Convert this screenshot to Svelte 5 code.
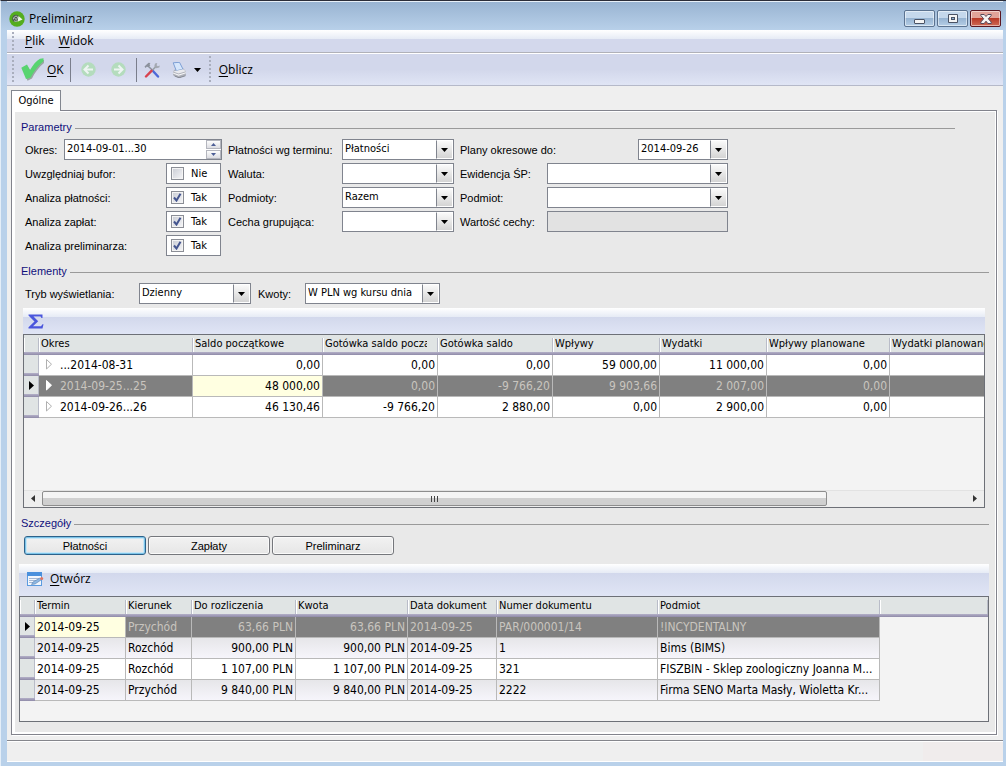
<script>
  let flags = $state([
    { label: 'Uwzględniaj bufor:', on: false },
    { label: 'Analiza płatności:', on: true },
    { label: 'Analiza zapłat:', on: true },
    { label: 'Analiza preliminarza:', on: true }
  ]);

  let period = $state('2014-09-01...30');
  let plannedTo = $state('2014-09-26');
  let detail = $state('Płatności');

  const middle = [
    { id: 'termin', label: 'Płatności wg terminu:', options: ['Płatności'] },
    { id: 'waluta', label: 'Waluta:', options: [''] },
    { id: 'podmioty', label: 'Podmioty:', options: ['Razem'] },
    { id: 'cecha', label: 'Cecha grupująca:', options: [''] }
  ];

  const details = ['Płatności', 'Zapłaty', 'Preliminarz'];

  const periodCols = [
    { title: 'Okres', width: 154 },
    { title: 'Saldo początkowe', width: 130 },
    { title: 'Gotówka saldo początkowe', width: 115 },
    { title: 'Gotówka saldo', width: 115 },
    { title: 'Wpływy', width: 107 },
    { title: 'Wydatki', width: 107 },
    { title: 'Wpływy planowane', width: 123 },
    { title: 'Wydatki planowane', width: 120 }
  ];
  const periodRows = [
    ['...2014-08-31', '0,00', '0,00', '0,00', '59 000,00', '11 000,00', '0,00', ''],
    ['2014-09-25...25', '48 000,00', '0,00', '-9 766,20', '9 903,66', '2 007,00', '0,00', ''],
    ['2014-09-26...26', '46 130,46', '-9 766,20', '2 880,00', '0,00', '2 900,00', '0,00', '']
  ];

  const payCols = [
    { title: 'Termin', width: 91 },
    { title: 'Kierunek', width: 66 },
    { title: 'Do rozliczenia', width: 104 },
    { title: 'Kwota', width: 112 },
    { title: 'Data dokument', width: 89 },
    { title: 'Numer dokumentu', width: 161 },
    { title: 'Podmiot', width: 222 }
  ];
  const payRows = [
    ['2014-09-25', 'Przychód', '63,66 PLN', '63,66 PLN', '2014-09-25', 'PAR/000001/14', '!INCYDENTALNY'],
    ['2014-09-25', 'Rozchód', '900,00 PLN', '900,00 PLN', '2014-09-25', '1', 'Bims (BIMS)'],
    ['2014-09-25', 'Rozchód', '1 107,00 PLN', '1 107,00 PLN', '2014-09-25', '321', 'FISZBIN - Sklep zoologiczny Joanna M...'],
    ['2014-09-25', 'Przychód', '9 840,00 PLN', '9 840,00 PLN', '2014-09-25', '2222', 'Firma SENO Marta Masły, Wioletta Kr...']
  ];
</script>

{#snippet grip()}
  <span class="grip" aria-hidden="true"></span>
{/snippet}

{#snippet caret()}
  <svg class="caret" width="7" height="4" viewBox="0 0 7 4" aria-hidden="true"><path d="M0 0h7L3.500 4z" /></svg>
{/snippet}

{#snippet combo(id, options)}
  <span class="box combo">
    <select {id}>
      {#each options as o}<option>{o}</option>{/each}
    </select>
    <span class="drop">{@render caret()}</span>
  </span>
{/snippet}

{#snippet pointer()}
  <svg width="5" height="9" viewBox="0 0 5 9" aria-hidden="true"><path d="M0 0v9l5-4.500z" /></svg>
{/snippet}

<div class="window">
  <header class="title">
    <svg width="16" height="16" viewBox="0 0 16 16" aria-hidden="true">
      <circle cx="8" cy="8" r="7.700" fill="#54ad1e" />
      <path d="M3.200 8.200C3 5 5.500 3.200 8 3.900c2.200.7 2.600 3 1.600 5.200-1.200 2.400-5.900 2.600-6.400-.9z" fill="#4a574c" />
      <path d="M4.600 8.300C4.500 6.200 6 5 7.600 5.300 9 5.700 8.800 7.400 7.700 8 6.800 8.400 6 8 6.100 7.200M5 9.500c.8 1 2 1 3.200.4" fill="none" stroke="#c9d4c9" stroke-width="1" />
      <path d="M9.500 5l4 3.500-5 2.300z" fill="#eef8e8" />
    </svg>
    <h1>Preliminarz</h1>
    <div class="winbtns">
      <button aria-label="Minimalizuj">
        <svg width="12" height="10" viewBox="0 0 12 10"><rect x=".500" y="5.500" width="10" height="4" rx=".500" fill="#f4f4f4" stroke="#4a5264" /></svg>
      </button>
      <button aria-label="Maksymalizuj">
        <svg width="12" height="10" viewBox="0 0 12 10"><path d="M1.500.500h9v8h-9z" fill="#f4f4f4" stroke="#4a5264" /><rect x="4.500" y="3.500" width="3" height="2" fill="#8fb0d2" stroke="#4a5264" /></svg>
      </button>
      <button class="close" aria-label="Zamknij">
        <svg width="12" height="10" viewBox="0 0 12 10"><path d="M.800.500h3.400L6 2.500 7.800.500h3.400v1L8.300 4.800l2.900 3.200v1.500H7.800L6 7.200 4.200 9.500H.800V8l2.900-3.200L.800 1.500z" fill="#f6f3f3" stroke="#57495a" /></svg>
      </button>
    </div>
  </header>

  <div class="client">
    <nav class="menu">
      {@render grip()}
      <button><u>P</u>lik</button>
      <button><u>W</u>idok</button>
    </nav>

    <div class="tools">
      {@render grip()}
      <button class="ok">
        <svg width="23" height="23" viewBox="0 0 23 23" aria-hidden="true">
          <path d="M2 11L7 9l3 4.500C13 8 16.500 4 20 2l3 0v3C18 9 13.500 15 11 20.500L6.500 22.800z" fill="#9aa6a2" />
          <path d="M.300 9.800L6 6.500l3 5.500C12 7 15 3 19 .800L22.500.300v3C18 7 13 13 9.800 19.500L5 21z" fill="#58d470" />
        </svg>
        <span><u>O</u>K</span>
      </button>
      <i class="sep"></i>
      <button class="nav" aria-label="Wstecz">
        <svg width="15" height="15" viewBox="0 0 15 15"><circle cx="7.500" cy="7.500" r="7.200" fill="#b4dcbd" /><path d="M12 7.500H4M7.500 3.500l-4 4 4 4" fill="none" stroke="#eef5f3" stroke-width="2" /></svg>
      </button>
      <button class="nav" aria-label="Dalej">
        <svg width="15" height="15" viewBox="0 0 15 15"><circle cx="7.500" cy="7.500" r="7.200" fill="#b4dcbd" /><path d="M3 7.500h8M7.500 3.500l4 4-4 4" fill="none" stroke="#eef5f3" stroke-width="2" /></svg>
      </button>
      <i class="sep"></i>
      <button class="wrench" aria-label="Narzędzia">
        <svg width="16" height="16" viewBox="0 0 16 16">
          <path d="M3.500 3.500L9 8.800" stroke="#8d939c" stroke-width="1.500" />
          <path d="M.500 4.500L4.500.800l2 .2-1 1.200.8 1-2 2-1.300-.700L1.500 6z" fill="#8b919c" />
          <path d="M8.500 8.500l5.500 6" stroke="#4c68d8" stroke-width="2.400" stroke-linecap="round" />
          <path d="M12 4.500L7.500 9" stroke="#9aa0a8" stroke-width="1.700" />
          <path d="M7.500 8.800L2 14.500" stroke="#d8434f" stroke-width="2.400" stroke-linecap="round" />
          <path d="M11 1.500L10.300 4.200l2 2 3-.700.500-2-2 .8-1.200-1L13.300 1z" fill="#a3a8b0" />
        </svg>
      </button>
      <button class="print" aria-label="Drukuj">
        <svg width="16" height="16" viewBox="0 0 16 16">
          <path d="M2 9.500l2-2.200 8-1 3 3v4L8 15.800l-6-2.500z" fill="#aeb1b9" />
          <path d="M2.200.800L8.500.300l3.500 6.900-6.700 1.600z" fill="#d6e6fb" stroke="#7d9fd4" />
          <path d="M2 9.500l3.300-.7 6.700-1.600 3 2.100-7.500 2.200z" fill="#e9eaee" />
          <path d="M2 10.500l5.500 2 7.500-2.200v1L7.500 13.700 2 11.500z" fill="#f6f6f8" />
          <path d="M3.500 13.900l4.500 1.900 6.500-2.100" stroke="#82868f" fill="none" />
        </svg>
        {@render caret()}
      </button>
      {@render grip()}
      <button class="calc"><u>O</u>blicz</button>
    </div>

    <main>
      <div class="tabs"><button class="tab">Ogólne</button></div>
      <div class="sheet">
        <div class="page">
          <h2 class="short">Parametry</h2>
          <div class="params">
            <div class="col one">
              <div class="line">
                <label class="grow" for="okres">Okres:</label>
                <span class="box period">
                  <input id="okres" bind:value={period} />
                  <span class="spin">
                    <button aria-label="Następny okres"><svg width="5" height="3" viewBox="0 0 5 3"><path d="M0 3h5L2.500 0z" /></svg></button>
                    <button aria-label="Poprzedni okres"><svg width="5" height="3" viewBox="0 0 5 3"><path d="M0 0h5L2.500 3z" /></svg></button>
                  </span>
                </span>
              </div>
              {#each flags as f, i}
                <div class="line">
                  <label class="grow" for="flag{i}">{f.label}</label>
                  <span class="box flag">
                    <span class="tick">
                      <input id="flag{i}" type="checkbox" bind:checked={f.on} />
                      <svg width="9" height="9" viewBox="0 0 9 9" aria-hidden="true"><path d="M1 4.500l2.500 3L7.500.800" /></svg>
                    </span>
                    <span>{f.on ? 'Tak' : 'Nie'}</span>
                  </span>
                </div>
              {/each}
            </div>
            <div class="col two">
              {#each middle as m}
                <div class="line">
                  <label class="grow" for={m.id}>{m.label}</label>
                  {@render combo(m.id, m.options)}
                </div>
              {/each}
            </div>
            <div class="col three">
              <div class="line">
                <label class="grow" for="plany">Plany okresowe do:</label>
                <span class="box date">
                  <input id="plany" bind:value={plannedTo} />
                  <button class="drop" aria-label="Kalendarz">{@render caret()}</button>
                </span>
              </div>
              <div class="line"><label class="grow" for="ewid">Ewidencja ŚP:</label>{@render combo('ewid', [''])}</div>
              <div class="line"><label class="grow" for="podm">Podmiot:</label>{@render combo('podm', [''])}</div>
              <div class="line"><label class="grow" for="wart">Wartość cechy:</label><span class="box off"><input id="wart" disabled /></span></div>
            </div>
          </div>

          <h2>Elementy</h2>
          <div class="view">
            <label class="mode" for="tryb">Tryb wyświetlania:</label>
            {@render combo('tryb', ['Dzienny'])}
            <label class="amounts" for="kwoty">Kwoty:</label>
            <span class="wide">{@render combo('kwoty', ['W PLN wg kursu dnia'])}</span>
          </div>

          <section class="periods">
            <div class="bar sum">
              <button aria-label="Suma">
                <svg width="16" height="15" viewBox="0 0 16 15"><path d="M.500.500h14V4h-1l-1-1.500H5.500l4.700 4.800-5.200 5h8l1.500-2h1L14.500 14.500H.500v-1.200l6-5.800-6-6z" fill="#4a56dc" /></svg>
              </button>
            </div>
            <div class="grid">
              <div class="clip">
                <table class="t1">
                  <colgroup><col class="mark" />{#each periodCols as c}<col style="width:{c.width}px" />{/each}</colgroup>
                  <thead><tr><th></th>{#each periodCols as c}<th><span>{c.title}</span></th>{/each}</tr></thead>
                  <tbody>
                    {#each periodRows as row, r}
                      <tr class:sel={r === 1}>
                        <th scope="row">{#if r === 1}{@render pointer()}{/if}</th>
                        {#each row as cell, c}
                          <td class:num={c > 0} class:focus={r === 1 && c === 1}>
                            {#if c === 0}
                              <svg class="twist" width="7" height="11" viewBox="0 0 7 11" aria-hidden="true"><path d="M.500.500v9.500L5.500 5.200z" /></svg>
                            {/if}{cell}
                          </td>
                        {/each}
                      </tr>
                    {/each}
                  </tbody>
                </table>
              </div>
              <div class="scroll">
                <button aria-label="W lewo"><svg width="4" height="7" viewBox="0 0 4 7"><path d="M4 0v7L0 3.500z" /></svg></button>
                <div class="track"><div class="thumb"><i></i><i></i><i></i></div></div>
                <button aria-label="W prawo"><svg width="4" height="7" viewBox="0 0 4 7"><path d="M0 0v7l4-3.500z" /></svg></button>
              </div>
            </div>
          </section>

          <h2>Szczegóły</h2>
          <div class="switch">
            {#each details as d}
              <button class:active={detail === d} onclick={() => (detail = d)}>{d}</button>
            {/each}
          </div>

          <section class="payments">
            <div class="bar open">
              <button>
                <svg width="17" height="15" viewBox="0 0 17 15" aria-hidden="true">
                  <rect x=".500" y=".500" width="14" height="13" fill="#f2f6fd" stroke="#5b9be0" />
                  <path d="M0 0h15v4H0z" fill="#4a90dd" />
                  <path d="M2 6.500h10M2 8.500h9M2 10.500h5" stroke="#a5b8d4" />
                  <path d="M4.500 12.500l1.500-2.500 7-4 1.500 1.700L8 12z" fill="#8eb8e4" stroke="#5b7fae" stroke-width=".600" />
                  <circle cx="14.700" cy="6.500" r="1.500" fill="#e07460" />
                </svg>
                <span><u>O</u>twórz</span>
              </button>
            </div>
            <div class="grid low">
              <table class="t2">
                <colgroup><col class="mark" />{#each payCols as c}<col style="width:{c.width}px" />{/each}<col /></colgroup>
                <thead><tr><th></th>{#each payCols as c}<th><span>{c.title}</span></th>{/each}<th></th></tr></thead>
                <tbody>
                  {#each payRows as row, r}
                    <tr class:sel={r === 0} class:alt={r % 2 === 1}>
                      <th scope="row">{#if r === 0}{@render pointer()}{/if}</th>
                      {#each row as cell, c}
                        <td class:num={c === 2 || c === 3} class:focus={r === 0 && c === 0}>{cell}</td>
                      {/each}
                      <td class="rest"></td>
                    </tr>
                  {/each}
                </tbody>
              </table>
            </div>
          </section>
        </div>
      </div>
    </main>

    <footer></footer>
  </div>
</div>

<style>
  :global(body) {
    margin: 0;
    background: #b9d1ea;
  }
  .window {
    --ui: 'Liberation Sans', Arial, sans-serif;
    --tahoma: 'DejaVu Sans Condensed', 'DejaVu Sans', sans-serif;
    --segoe: 'Open Sans', 'Noto Sans', sans-serif;
    box-sizing: border-box;
    min-height: 100vh;
    display: flex;
    flex-direction: column;
    padding: 0 3px 4px 6px;
    border-top: 1px solid #2b2d38;
    border-left: 1px solid #e4eef8;
    background: linear-gradient(#98b3d1, #b9d1ea 30px, #b9d1ea);
    font: 11px/14px var(--ui);
    color: #000;
  }
  button,
  input,
  select {
    font: inherit;
    color: inherit;
    margin: 0;
    padding: 0;
    border: 0;
    background: none;
    border-radius: 0;
  }
  button {
    display: flex;
    align-items: center;
    justify-content: center;
  }
  svg {
    display: block;
    flex: none;
  }
  u {
    text-underline-offset: 2px;
  }

  .title {
    display: flex;
    align-items: center;
    gap: 4px;
    height: 29px;
    padding: 6px 2px 0;
    box-sizing: border-box;
    box-shadow: 0 1px 0 #e8f0f8 inset;
    font: 12px/16px var(--segoe);
  }
  h1 {
    margin: 0;
    flex: 1;
    font: inherit;
  }
  .winbtns {
    display: flex;
    gap: 2px;
  }
  .winbtns button {
    box-sizing: border-box;
    width: 31px;
    height: 17px;
    border: 1px solid #5c7390;
    border-radius: 2px;
    background: linear-gradient(#c5d8ec 45%, #97b4d2 50%, #b5cee6);
    box-shadow: 0 0 0 1px rgba(255, 255, 255, 0.5) inset;
  }
  .winbtns .close {
    border-color: #5a1620;
    background: linear-gradient(#e2a399 45%, #b93a28 50%, #cf6a55);
  }

  .client {
    flex: 1;
    display: flex;
    flex-direction: column;
    background: #efefef;
  }
  .menu,
  .tools {
    display: flex;
    align-items: center;
    font: 12px/16px var(--segoe);
  }
  .menu {
    height: 22px;
    padding-left: 5px;
    gap: 14px;
    border-bottom: 1px solid #b0b1b8;
    background: linear-gradient(#fff, #e6ebf5 9px, #d3d8ec 9px, #d3d8ec);
  }
  .menu .grip {
    margin-right: -4px;
  }
  .tools {
    height: 33px;
    padding-left: 5px;
    box-sizing: border-box;
    border-top: 1px solid #fff;
    border-bottom: 1px solid #b5b9c9;
    background: linear-gradient(#d2d7eb 50%, #e0e5f5);
  }
  .grip {
    width: 3px;
    height: 18px;
    background: radial-gradient(circle at 1px 1px, #a9aebd 1px, transparent 1px) 0 0 / 3px 4px;
  }
  .tools .grip {
    height: 27px;
  }
  .sep {
    width: 1px;
    height: 24px;
    background: #7a7e8c;
  }
  .ok {
    gap: 3px;
    padding: 0 6px;
  }
  .nav {
    width: 30px;
  }
  .sep + .nav {
    padding-left: 2px;
    width: 33px;
  }
  .nav + .sep {
    margin-left: 2px;
  }
  .wrench {
    width: 30px;
  }
  .print {
    gap: 7px;
    margin-left: 4px;
    padding-right: 8px;
  }
  .calc {
    margin-left: 7px;
  }
  .caret {
    fill: #000;
  }

  main {
    flex: 1;
    display: flex;
    flex-direction: column;
    padding: 4px 6px 5px 4px;
  }
  .tabs {
    display: flex;
  }
  .tab {
    height: 21px;
    width: 50px;
    box-sizing: border-box;
    margin-bottom: -1px;
    border: 1px solid #82868f;
    border-bottom: 0;
    background: #fff;
    font: 11px/14px var(--tahoma);
    z-index: 1;
  }
  .sheet {
    flex: 1;
    display: flex;
    padding: 1px 1px 2px 3px;
    border: 1px solid #82838c;
    background: #fff;
    box-shadow: 1px 1px 0 #fff;
  }
  .page {
    flex: 1;
    min-width: 0;
    display: flex;
    flex-direction: column;
    padding: 8px 6px 10px 4px;
    background: #e9e9e9;
  }
  h2 {
    display: flex;
    align-items: center;
    gap: 3px;
    margin: 0 0 0 2px;
    font: 11px/14px var(--ui);
    color: #10107c;
  }
  h2::after {
    content: '';
    flex: 1;
    height: 1px;
    margin-top: 3px;
    background: #9a9a9a;
  }
  .short {
    margin-right: 34px;
  }

  .params {
    display: flex;
    gap: 6px;
    padding: 5px 0 0 6px;
  }
  .col {
    display: flex;
    flex-direction: column;
    gap: 3px;
  }
  .one {
    width: 197px;
  }
  .two {
    width: 226px;
  }
  .three {
    width: 268px;
  }
  .line {
    display: flex;
    align-items: center;
    height: 21px;
  }
  .grow {
    flex: 1;
  }
  .box {
    display: flex;
    position: relative;
    box-sizing: border-box;
    height: 21px;
    border: 1px solid #80848e;
    background: #fff;
    font: 11px/14px var(--tahoma);
  }
  .box input:not([type='checkbox']),
  .box select {
    flex: 1;
    min-width: 0;
    padding: 0 1px 1px 2px;
    appearance: none;
  }
  .combo {
    width: 112px;
  }
  .three .combo,
  .off {
    width: 181px;
  }
  .wide .combo {
    width: 135px;
  }
  .off {
    background: #e2e2e2;
  }
  .date {
    width: 90px;
  }
  .drop {
    display: flex;
    align-items: center;
    justify-content: center;
    box-sizing: border-box;
    width: 17px;
    border: 1px solid #fff;
    border-left: 1px solid #80848e;
    background: linear-gradient(#fafafa, #d4d4d4);
  }
  .combo .drop {
    position: absolute;
    inset: 0 0 0 auto;
    pointer-events: none;
  }
  .period {
    width: 158px;
  }
  .spin {
    display: flex;
    flex-direction: column;
    width: 15px;
    gap: 1px;
  }
  .spin button {
    flex: 1;
    border: 1px solid #b4b6be;
    background: linear-gradient(#fdfdfd, #dcdde2);
    fill: #4c5e96;
  }
  .flag {
    width: 55px;
    align-items: center;
    gap: 7px;
    padding-left: 4px;
    margin-right: 1px;
  }
  .tick {
    position: relative;
    display: flex;
  }
  .tick input {
    appearance: none;
    box-sizing: border-box;
    width: 13px;
    height: 13px;
    border: 1px solid #8b8e96;
    background: linear-gradient(135deg, #c9ccd4, #f6f6f8);
    box-shadow: 0 0 0 1px #f4f4f4 inset;
  }
  .tick svg {
    position: absolute;
    inset: 2px;
    visibility: hidden;
    fill: none;
    stroke: #44558f;
    stroke-width: 2;
    pointer-events: none;
  }
  .tick input:checked + svg {
    visibility: visible;
  }

  .params + h2 {
    margin-top: 8px;
  }
  .view {
    display: flex;
    align-items: center;
    padding: 5px 0 4px 6px;
  }
  .mode {
    width: 114px;
  }
  .amounts {
    width: 47px;
    margin-left: 7px;
  }

  .bar {
    display: flex;
    align-items: center;
    background: linear-gradient(#fff, #e6ebf5 9px, #d2d8ec 9px, #e0e5f5);
    font: 12px/16px var(--segoe);
  }
  .periods {
    flex: 1;
    display: flex;
    flex-direction: column;
    margin: 0 4px 8px;
  }
  .sum {
    height: 26px;
    padding-left: 5px;
  }
  .grid {
    border: 1px solid #6d7077;
    background: #f3f3f3;
  }
  .periods .grid {
    flex: 1;
    display: flex;
    flex-direction: column;
  }
  .clip {
    flex: 1;
    overflow: hidden;
  }
  table {
    table-layout: fixed;
    border-collapse: separate;
    border-spacing: 0;
    font: 12px/14px var(--tahoma);
  }
  .t1 {
    width: 986px;
  }
  .t2 {
    width: 100%;
  }
  .mark {
    width: 15px;
  }
  th,
  td {
    box-sizing: border-box;
    height: 21px;
    padding: 0 2px;
    text-align: left;
    font-weight: normal;
    white-space: nowrap;
    overflow: hidden;
  }
  thead th {
    height: 20px;
    padding: 0;
    background:
      linear-gradient(#b4b0c8, #8f8aa8) 0 100% / 100% 3px no-repeat,
      linear-gradient(#b9bcc8, #b9bcc8) 100% 3px / 1px 14px no-repeat,
      linear-gradient(#fff, #fff) 0 3px / 1px 14px no-repeat,
      #e0e4e4;
    font-size: 11px;
  }
  thead span {
    display: block;
    margin: 0 4px 2px 2px;
    overflow: hidden;
  }
  .t1 thead span {
    margin-right: 11px;
  }
  .t1 th:last-child span {
    margin-right: 0;
  }
  tbody th {
    padding: 0 0 0 5px;
    background:
      linear-gradient(#b4b0c8, #8f8aa8) 0 100% / 100% 3px no-repeat,
      linear-gradient(#b9bcc8, #b9bcc8) 100% 0 / 1px 18px no-repeat,
      #e0e4e4;
  }
  tbody th svg {
    margin-bottom: 2px;
  }
  td {
    background: #fff;
    border-right: 1px solid #b9b9b9;
    border-bottom: 1px solid #b9b9b9;
  }
  .num {
    text-align: right;
  }
  .sel td {
    background: #808080;
    color: #c9c5bf;
  }
  .alt td {
    background: linear-gradient(#e6e6e9, #f6f5fb);
  }
  .sel .focus {
    background: #ffffe1;
    color: #000;
  }
  tr .rest,
  .sel .rest {
    background: none;
    border: 0;
  }
  .twist {
    display: inline-block;
    margin: 0 7px -1px 5px;
    fill: #fff;
    stroke: #b0b0b0;
  }
  .sel .twist {
    stroke: #fff;
  }

  .scroll {
    display: flex;
    height: 17px;
    background: #eee;
    border-top: 1px solid #e2e2e2;
    box-sizing: border-box;
    padding-bottom: 1px;
  }
  .scroll button {
    width: 18px;
    fill: #333;
  }
  .track {
    flex: 1;
    display: flex;
  }
  .thumb {
    box-sizing: border-box;
    width: 85%;
    display: flex;
    justify-content: center;
    align-items: center;
    gap: 2px;
    border: 1px solid #8d8d8d;
    border-radius: 2px;
    background: linear-gradient(#f4f4f4 45%, #d0d0d0 50%, #cfcfcf);
  }
  .thumb i {
    width: 1px;
    height: 6px;
    background: #444;
  }

  .switch {
    display: flex;
    gap: 2px;
    padding: 6px 5px 9px;
  }
  .switch button {
    box-sizing: border-box;
    width: 122px;
    height: 19px;
    border: 1px solid #75777c;
    border-radius: 3px;
    background: linear-gradient(#f2f2f2, #e6e6e6);
    box-shadow: 0 0 0 1px #fafafa inset;
  }
  .switch .active {
    border-color: #2c628b;
    box-shadow:
      0 0 0 1px #7cc4e8 inset,
      0 0 0 2px #c8e6f6 inset;
  }

  .open {
    height: 32px;
    padding: 0 0 2px 8px;
    box-sizing: border-box;
  }
  .open button {
    gap: 6px;
  }
  .low {
    min-height: 124px;
  }

  footer {
    height: 20px;
    border-top: 1px solid #85868c;
    border-bottom: 1px solid #fff;
    box-shadow: 0 1px 0 #fff inset;
    background: linear-gradient(90deg, #efefef 92%, #f0ecec 92%);
  }
</style>
